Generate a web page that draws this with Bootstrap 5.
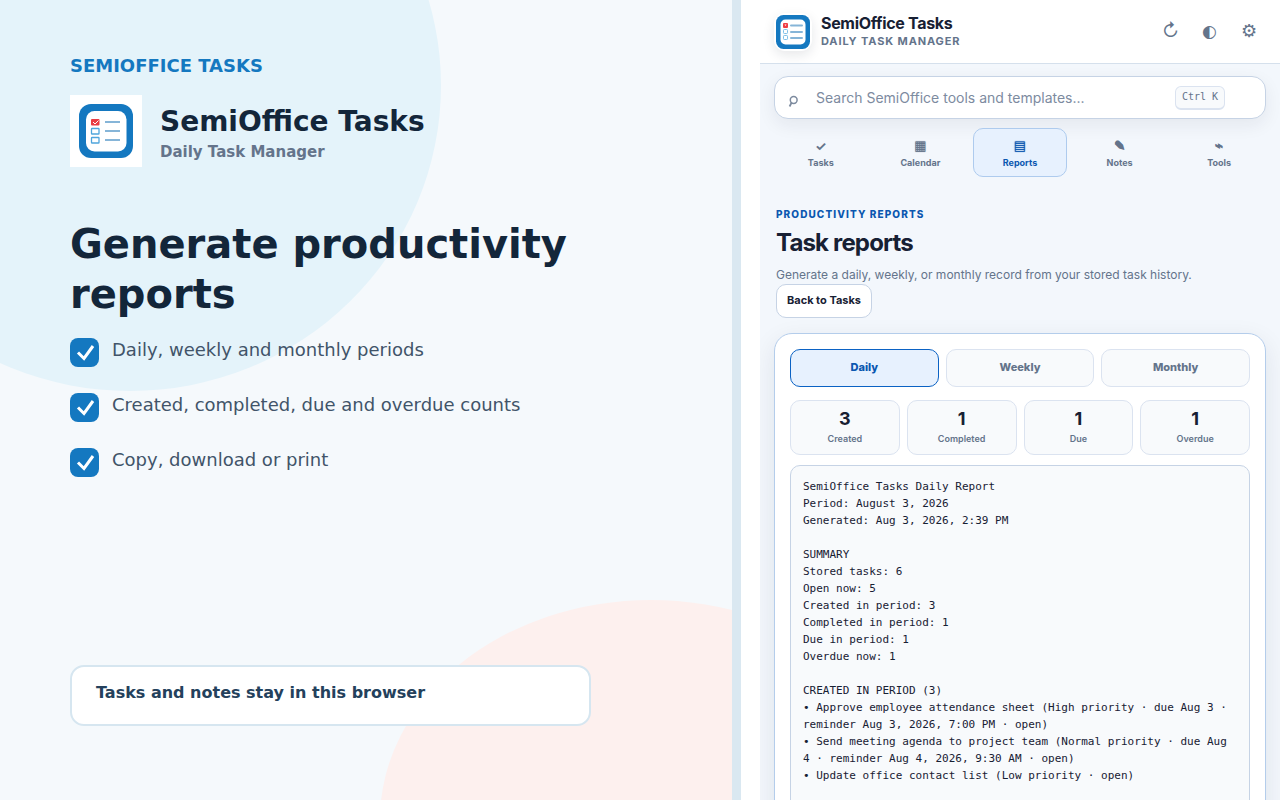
<!DOCTYPE html>
<html lang="en">
<head>
<meta charset="utf-8">
<meta name="viewport" content="width=device-width, initial-scale=1">
<title>SemiOffice Tasks – Reports</title>
<link href="https://cdn.jsdelivr.net/npm/bootstrap@5.3.0/dist/css/bootstrap.min.css" rel="stylesheet">
<style>
  :root { --ink:#172033; --muted:#64748b; --blue:#1478c0; --link:#0b57b0; --line:#dbe3f0; --line-strong:#c6d3e5; --soft:#f8fafc; }
  .shell { display:grid; grid-template-columns:minmax(0,741fr) minmax(0,539fr); min-height:100vh; }

  /* Promotional side */
  .promo { background:#f5f9fc; border-right:9px solid #dae8f1; padding:54px 70px 74px; font-family:"DejaVu Sans",sans-serif; color:#13263a; isolation:isolate; }
  .blob { position:absolute; border-radius:50%; z-index:-1; }
  .blob-blue { left:-181px; top:-220px; width:622px; height:611px; background:#e4f3fa; }
  .blob-pink { left:380px; top:600px; width:542px; height:440px; background:#fdf0ee; }
  .promo-eyebrow { font-size:18px; line-height:24px; font-weight:700; color:var(--blue); margin-bottom:17px; }
  .promo-brand { gap:18px; }
  .promo-logo { width:72px; height:72px; }
  .promo-name { font-size:28px; line-height:34px; font-weight:700; padding-top:4px; }
  .promo-tag { font-size:15px; line-height:20px; font-weight:700; color:#64748b; margin-top:3px; }
  .promo h1 { font-size:40px; line-height:50px; font-weight:700; margin:52px 0 19px; }
  .promo-list { font-size:18px; line-height:24px; color:#415469; display:grid; gap:26px; }
  .promo-list li { gap:13px; }
  .promo-list svg { width:29px; height:29px; }
  .promo-note { border:2px solid #d6e6f0; border-radius:14px; background:#fff; color:#24415c; font-size:16px; line-height:24px; font-weight:700; padding:14px 24px 19px; max-width:521px; }

  /* Application side */
  .app-wrap { padding-left:19px; background:#fff; height:100vh; }
  .app-pane { height:100%; overflow-y:auto; scrollbar-width:none; background:#f3f7fc; font-family:Inter,sans-serif; color:var(--ink); }
  .app-pane::-webkit-scrollbar { display:none; }
  .topbar { height:64px; background:#fff; border-bottom:1px solid #d5e0ec; padding:0 12px 0 14px; }
  .app-logo { width:38px; height:38px; border-radius:11px; background:#fff; box-shadow:0 4px 12px rgba(23,32,51,.10); }
  .app-title { padding-left:9px; padding-bottom:2px; }
  .app-name { font-size:16px; line-height:20px; font-weight:700; letter-spacing:-.02em; }
  .app-sub { font-size:11px; line-height:14px; font-weight:700; letter-spacing:.08em; color:var(--muted); margin-top:1px; }
  .icon-btn { width:39px; height:38px; padding:0 0 2px; border:0; background:none; color:var(--muted); font-size:18px; line-height:36px; }
  .icon-btn.theme { font:17px/36px "DejaVu Sans",sans-serif; }
  .app-main { padding:12px 14px 0; }
  .search { height:43px; border:1px solid var(--line-strong); border-radius:14px; background:#fff; padding:0 40px 0 12px; box-shadow:0 6px 18px rgba(23,32,51,.07); color:var(--muted); }
  .search-icon { width:12px; height:18px; margin-top:6px; }
  .search input { border:0; outline:0; background:none; flex:1; min-width:0; font-size:14px; line-height:20px; padding:0 0 0 17px; }
  .search input::placeholder { color:#7d8b9f; opacity:1; }
  .search kbd { font:10px/16px "DejaVu Sans Mono",monospace; color:var(--muted); background:var(--soft); border:1px solid var(--line); border-bottom-width:2px; border-radius:6px; padding:2px 6px 3px; }
  .tabs { display:grid; grid-template-columns:repeat(5,minmax(0,1fr)); gap:6px; margin-top:9px; }
  .tab-btn { height:49px; border:1px solid transparent; border-radius:10px; background:none; padding:2px 0 0; color:var(--muted); font-size:9px; line-height:14px; font-weight:700; }
  .tab-btn i { display:block; height:16px; font:bold 13px/16px "DejaVu Sans",sans-serif; margin-bottom:2px; -webkit-text-stroke:1px currentColor; }
  .tab-btn i.check-glyph { font-family:Inter,sans-serif; -webkit-text-stroke-width:0; }
  .tab-btn i.box-glyph { -webkit-text-stroke-width:0; text-shadow:0 0 1px currentColor; }
  .tab-btn.active { background:#e7f1fe; border-color:#aecbee; color:var(--link); }
  .report-head { padding:30px 2px 0; }
  .eyebrow { font-size:10px; line-height:14px; font-weight:800; letter-spacing:.11em; color:var(--link); }
  .report-head h2 { font-size:24px; line-height:30px; font-weight:700; letter-spacing:-.035em; margin:7px 0 7px; }
  .report-head p { font-size:12px; line-height:19px; color:var(--muted); margin:0; }
  .back-btn { height:34px; border:1px solid var(--line-strong); border-radius:10px; background:#fff; color:var(--ink); font-size:11px; line-height:14px; font-weight:700; padding:0 10px 2px; }
  .report-card { margin-top:15px; border:1px solid #b4cdeb; border-radius:18px; background:#fff; padding:15px; box-shadow:0 8px 26px rgba(23,32,51,.09); }
  .periods { display:grid; grid-template-columns:repeat(3,minmax(0,1fr)); gap:7px; }
  .periods button { height:38px; border:1px solid var(--line); border-radius:10px; background:var(--soft); color:var(--muted); font-size:11px; line-height:14px; font-weight:800; padding:0 0 2px; }
  .periods .active { background:#e7f1fe; border-color:#0b62c4; color:var(--link); }
  .stats { display:grid; grid-template-columns:repeat(4,minmax(0,1fr)); gap:7px; margin:13px 0 10px; }
  .stats > div { height:55px; border:1px solid var(--line); border-radius:10px; background:var(--soft); padding-top:7px; text-align:center; }
  .stats strong { display:block; font-size:18px; line-height:22px; font-weight:700; }
  .stats span { display:block; font-size:9px; line-height:14px; font-weight:600; color:var(--muted); margin-top:2px; }
  .report-text { border:1px solid var(--line-strong); border-radius:10px; background:var(--soft); color:var(--ink); font:11px/17px "DejaVu Sans Mono",monospace; white-space:pre-wrap; padding:12px 12px 48px; margin:0; }
</style>
</head>
<body>
<svg class="d-none" aria-hidden="true">
  <symbol id="logo" viewBox="0 0 54 54">
    <rect width="54" height="54" rx="12" fill="#1478c0"/>
    <rect x="7" y="7" width="40.500" height="40.500" rx="8.500" fill="#fff"/>
    <rect x="12" y="15" width="8.500" height="6.500" rx="1" fill="#e93c43"/>
    <path d="M14 18l2 2 3.500-3.500" fill="none" stroke="#fff"/>
    <g fill="none" stroke="#4fa5dc" stroke-width="1.300"><rect x="12.500" y="24.500" width="7.500" height="5.500" rx=".6"/><rect x="12.500" y="33.500" width="7.500" height="5.500" rx=".6"/></g>
    <path d="M26 18h15M26 27h15M26 36h15" stroke="#86b5d8" stroke-width="2"/>
  </symbol>
  <symbol id="logo-small" viewBox="0 0 34 34">
    <rect width="34" height="34" rx="7.500" fill="#1478c0"/>
    <rect x="4.500" y="4.500" width="25" height="25" rx="5" fill="#fff"/>
    <rect x="7" y="8" width="5" height="5" rx="1" fill="#ee3d44"/>
    <path d="M8.500 9.500h2l-1 1.500z" fill="#fff"/>
    <g fill="none" stroke="#7cbfe8"><rect x="7.500" y="14.500" width="4" height="4" rx=".8"/><rect x="7.500" y="20.500" width="4" height="4" rx=".8"/></g>
    <path d="M15 10.500h11M15 17h11M15 23h11" stroke="#86b5d8" stroke-width="2" stroke-linecap="round"/>
  </symbol>
  <symbol id="tick" viewBox="0 0 29 29">
    <rect width="29" height="29" rx="8" fill="#1478c0"/>
    <path d="M8 14.500l6 6 9-12.500" fill="none" stroke="#fff" stroke-width="3"/>
  </symbol>
</svg>
<div class="shell">
  <section class="promo position-relative overflow-hidden d-flex flex-column">
    <div class="blob blob-blue"></div>
    <div class="blob blob-pink"></div>
    <div class="promo-eyebrow">SEMIOFFICE TASKS</div>
    <div class="promo-brand d-flex align-items-center">
      <div class="promo-logo bg-white d-flex align-items-center justify-content-center"><svg width="54" height="54" role="img" aria-label="SemiOffice Tasks logo"><use href="#logo"/></svg></div>
      <div>
        <div class="promo-name">SemiOffice Tasks</div>
        <div class="promo-tag">Daily Task Manager</div>
      </div>
    </div>
    <h1>Generate productivity reports</h1>
    <ul class="promo-list list-unstyled mb-4">
      <li class="d-flex"><svg class="flex-shrink-0" aria-hidden="true"><use href="#tick"/></svg><span>Daily, weekly and monthly periods</span></li>
      <li class="d-flex"><svg class="flex-shrink-0" aria-hidden="true"><use href="#tick"/></svg><span>Created, completed, due and overdue counts</span></li>
      <li class="d-flex"><svg class="flex-shrink-0" aria-hidden="true"><use href="#tick"/></svg><span>Copy, download or print</span></li>
    </ul>
    <div class="promo-note mt-auto">Tasks and notes stay in this browser</div>
  </section>

  <div class="app-wrap">
    <div class="app-pane">
      <header class="topbar d-flex align-items-center">
        <div class="app-logo d-flex align-items-center justify-content-center"><svg width="34" height="34" role="img" aria-label="SemiOffice Tasks logo"><use href="#logo-small"/></svg></div>
        <div class="app-title me-auto">
          <div class="app-name">SemiOffice Tasks</div>
          <div class="app-sub">DAILY TASK MANAGER</div>
        </div>
        <button class="icon-btn" type="button" aria-label="Refresh">↻</button>
        <button class="icon-btn theme" type="button" aria-label="Theme">◐</button>
        <button class="icon-btn" type="button" aria-label="Settings">⚙</button>
      </header>
      <main class="app-main">
        <div class="search d-flex align-items-center">
          <label for="q" class="d-flex" aria-label="Search"><svg class="search-icon" viewBox="0 0 12 18" fill="none" stroke="#7d8b9f"><circle cx="6.700" cy="8" r="3.400" stroke-width="1.500"/><path d="M4.600 10.500L2.600 14.500" stroke-width="1.800"/></svg></label>
          <input id="q" type="search" placeholder="Search SemiOffice tools and templates...">
          <kbd>Ctrl K</kbd>
        </div>
        <nav class="tabs" aria-label="Sections">
          <button class="tab-btn" type="button"><i class="check-glyph">✓</i>Tasks</button>
          <button class="tab-btn" type="button"><i class="box-glyph">▦</i>Calendar</button>
          <button class="tab-btn active" type="button" aria-current="page"><i class="box-glyph">▤</i>Reports</button>
          <button class="tab-btn" type="button"><i>✎</i>Notes</button>
          <button class="tab-btn" type="button"><i>⌁</i>Tools</button>
        </nav>
        <section class="report-head">
          <div class="eyebrow">PRODUCTIVITY REPORTS</div>
          <h2>Task reports</h2>
          <p>Generate a daily, weekly, or monthly record from your stored task history.</p>
          <button class="back-btn" type="button">Back to Tasks</button>
        </section>
        <section class="report-card">
          <div class="periods">
            <button class="active" type="button">Daily</button>
            <button type="button">Weekly</button>
            <button type="button">Monthly</button>
          </div>
          <div class="stats">
            <div><strong>3</strong><span>Created</span></div>
            <div><strong>1</strong><span>Completed</span></div>
            <div><strong>1</strong><span>Due</span></div>
            <div><strong>1</strong><span>Overdue</span></div>
          </div>
          <pre class="report-text">SemiOffice Tasks Daily Report
Period: August 3, 2026
Generated: Aug 3, 2026, 2:39 PM

SUMMARY
Stored tasks: 6
Open now: 5
Created in period: 3
Completed in period: 1
Due in period: 1
Overdue now: 1

CREATED IN PERIOD (3)
• Approve employee attendance sheet (High priority · due Aug 3 · reminder Aug 3, 2026, 7:00 PM · open)
• Send meeting agenda to project team (Normal priority · due Aug 4 · reminder Aug 4, 2026, 9:30 AM · open)
• Update office contact list (Low priority · open)</pre>
        </section>
      </main>
    </div>
  </div>
</div>
<script src="https://cdn.jsdelivr.net/npm/bootstrap@5.3.0/dist/js/bootstrap.bundle.min.js"></script>
</body>
</html>
